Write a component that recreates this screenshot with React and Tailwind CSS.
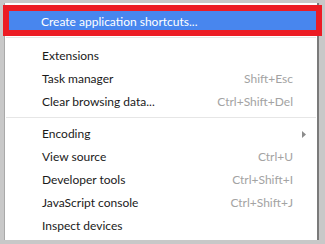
import React from 'react';

const groupOne = [
    { label: 'Extensions' },
    { label: 'Task manager', shortcut: 'Shift+Esc' },
    { label: 'Clear browsing data...', shortcut: 'Ctrl+Shift+Del' },
];

const groupTwo = [
    { label: 'Encoding', submenu: true },
    { label: 'View source', shortcut: 'Ctrl+U' },
    { label: 'Developer tools', shortcut: 'Ctrl+Shift+I' },
    { label: 'JavaScript console', shortcut: 'Ctrl+Shift+J' },
    { label: 'Inspect devices' },
];

const MenuRow = ({ label, shortcut, submenu }) => (
    <div className="h-[23px] flex items-center pt-px pl-[37px] pr-[24px] text-[#1a1a1a]">
        <span className="flex-1">{label}</span>
        {shortcut && <span className="text-[#a3a3a3]">{shortcut}</span>}
        {submenu && (
            <svg width="4" height="7" viewBox="0 0 4 7" className="mr-[-13px]">
                <path d="M0 0 L4 3.5 L0 7 Z" fill="#8c8c8c" />
            </svg>
        )}
    </div>
);

const Separator = ({ h, top }) => (
    <div className={`${h} flex flex-col`}>
        <div className={top} />
        <div className="h-px bg-[#e6e6e6] ml-[1px] mr-[1px]" />
    </div>
);

const App = () => {
    return (
        <div
            className="relative w-[325px] h-[244px] bg-[#c8c8c8] pt-[3px] pl-[4px] overflow-hidden text-[12px]"
            style={{ fontFamily: 'Lato, "Noto Sans", sans-serif' }}
        >
            <div className="w-[315px] h-[237px] bg-white border-l border-l-[#a9a9a9] border-r-2 border-r-[#7a7a7a] pt-[8px]">
                <div className="h-[20px] w-[307px] ml-[4px] bg-[#4886ee] text-white flex items-center pt-px pl-[32px]">
                    Create application shortcuts...
                </div>
                <Separator h="h-[13px]" top="h-[6px]" />
                {groupOne.map((item) => (
                    <MenuRow key={item.label} {...item} />
                ))}
                <Separator h="h-[9px]" top="h-[4px]" />
                {groupTwo.map((item) => (
                    <MenuRow key={item.label} {...item} />
                ))}
            </div>

            {/* red annotation box */}
            <div className="absolute left-[3px] top-[5px] w-[319px] h-[31px] border-[6px] border-[#ec1c24]" />
        </div>
    );
};

export default App;
